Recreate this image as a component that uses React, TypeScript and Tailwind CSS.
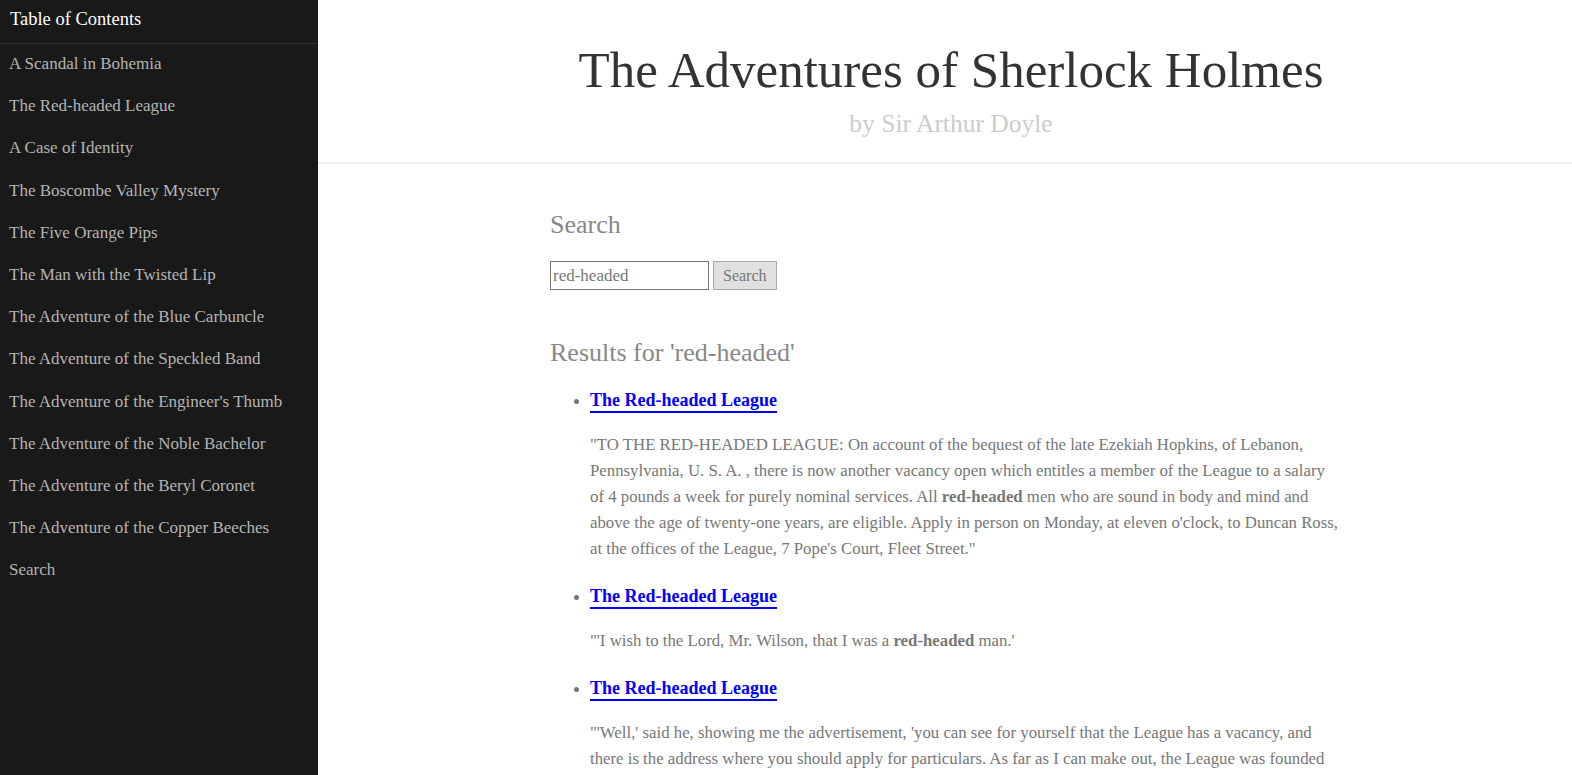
const chapters = [
  'A Scandal in Bohemia',
  'The Red-headed League',
  'A Case of Identity',
  'The Boscombe Valley Mystery',
  'The Five Orange Pips',
  'The Man with the Twisted Lip',
  'The Adventure of the Blue Carbuncle',
  'The Adventure of the Speckled Band',
  "The Adventure of the Engineer's Thumb",
  'The Adventure of the Noble Bachelor',
  'The Adventure of the Beryl Coronet',
  'The Adventure of the Copper Beeches',
  'Search',
];

const serif = { fontFamily: '"Liberation Serif", "DejaVu Serif", serif' };

// lines broken where the original page wraps them
const Result = ({ children }: { children: React.ReactNode }) => (
  <li className="mb-[22px] ml-[40px] list-disc marker:text-[#777]">
    <a href="#" className="text-[18px] leading-[24px] font-bold text-[#0000ff] underline underline-offset-[5px] decoration-[1.5px]">
      The Red-headed League
    </a>
    <p className="mt-[19px] whitespace-nowrap text-[16.8px] leading-[26px] text-[#777]">{children}</p>
  </li>
);

export default function App() {
  return (
    <div className="flex min-h-screen bg-white" style={serif}>
      <aside className="fixed left-0 top-0 h-screen w-[318px] bg-[#191919]">
        <div className="border-b border-[#333] px-[10px] pb-[11px] pt-[6px] text-[18.5px] leading-[26px] text-white">
          Table of Contents
        </div>
        <ul className="pt-[7px]">
          {chapters.map((c) => (
            <li key={c} className="h-[42.2px] px-[9px] text-[17px] leading-[26px] text-[#b4b4b4]">
              <a href="#">{c}</a>
            </li>
          ))}
        </ul>
      </aside>
      <main className="ml-[318px] h-screen flex-1 overflow-hidden">
        <header className="border-b-2 border-[#eee] pb-[23px] pl-[12px] pt-[38px] text-center">
          <h1 className="text-[51px] leading-[64px] text-[#333]">The Adventures of Sherlock Holmes</h1>
          <div className="mt-[7px] text-[25.5px] leading-[30px] text-[#ccc]">by Sir Arthur Doyle</div>
        </header>
        <section className="mx-auto w-[790px] pt-[46px]">
          <h2 className="text-[26px] leading-[30px] text-[#888]">Search</h2>
          <form className="mt-[21px] flex gap-[4px]" onSubmit={(e) => e.preventDefault()}>
            <input
              defaultValue="red-headed"
              className="h-[29px] w-[159px] border border-[#767676] px-[2px] text-[17px] text-[#777] outline-none"
              style={serif}
            />
            <button className="h-[29px] border border-[#aaa] bg-[#e0e0e0] px-[9px] text-[16px] text-[#777]" style={serif}>
              Search
            </button>
          </form>
          <h2 className="mt-[48px] text-[26px] leading-[30px] text-[#888]">Results for 'red-headed'</h2>
          <ul className="mt-[20px]">
            <Result>
              "TO THE RED-HEADED LEAGUE: On account of the bequest of the late Ezekiah Hopkins, of Lebanon,
              <br />
              Pennsylvania, U. S. A. , there is now another vacancy open which entitles a member of the League to a salary
              <br />
              of 4 pounds a week for purely nominal services. All <b>red-headed</b> men who are sound in body and mind and
              <br />
              above the age of twenty-one years, are eligible. Apply in person on Monday, at eleven o'clock, to Duncan Ross,
              <br />
              at the offices of the League, 7 Pope's Court, Fleet Street."
            </Result>
            <Result>
              "'I wish to the Lord, Mr. Wilson, that I was a <b>red-headed</b> man.'
            </Result>
            <Result>
              "'Well,' said he, showing me the advertisement, 'you can see for yourself that the League has a vacancy, and
              <br />
              there is the address where you should apply for particulars. As far as I can make out, the League was founded
              <br />
              by an American millionaire, Ezekiah Hopkins, who was very peculiar in his ways.
            </Result>
          </ul>
        </section>
      </main>
    </div>
  );
}
